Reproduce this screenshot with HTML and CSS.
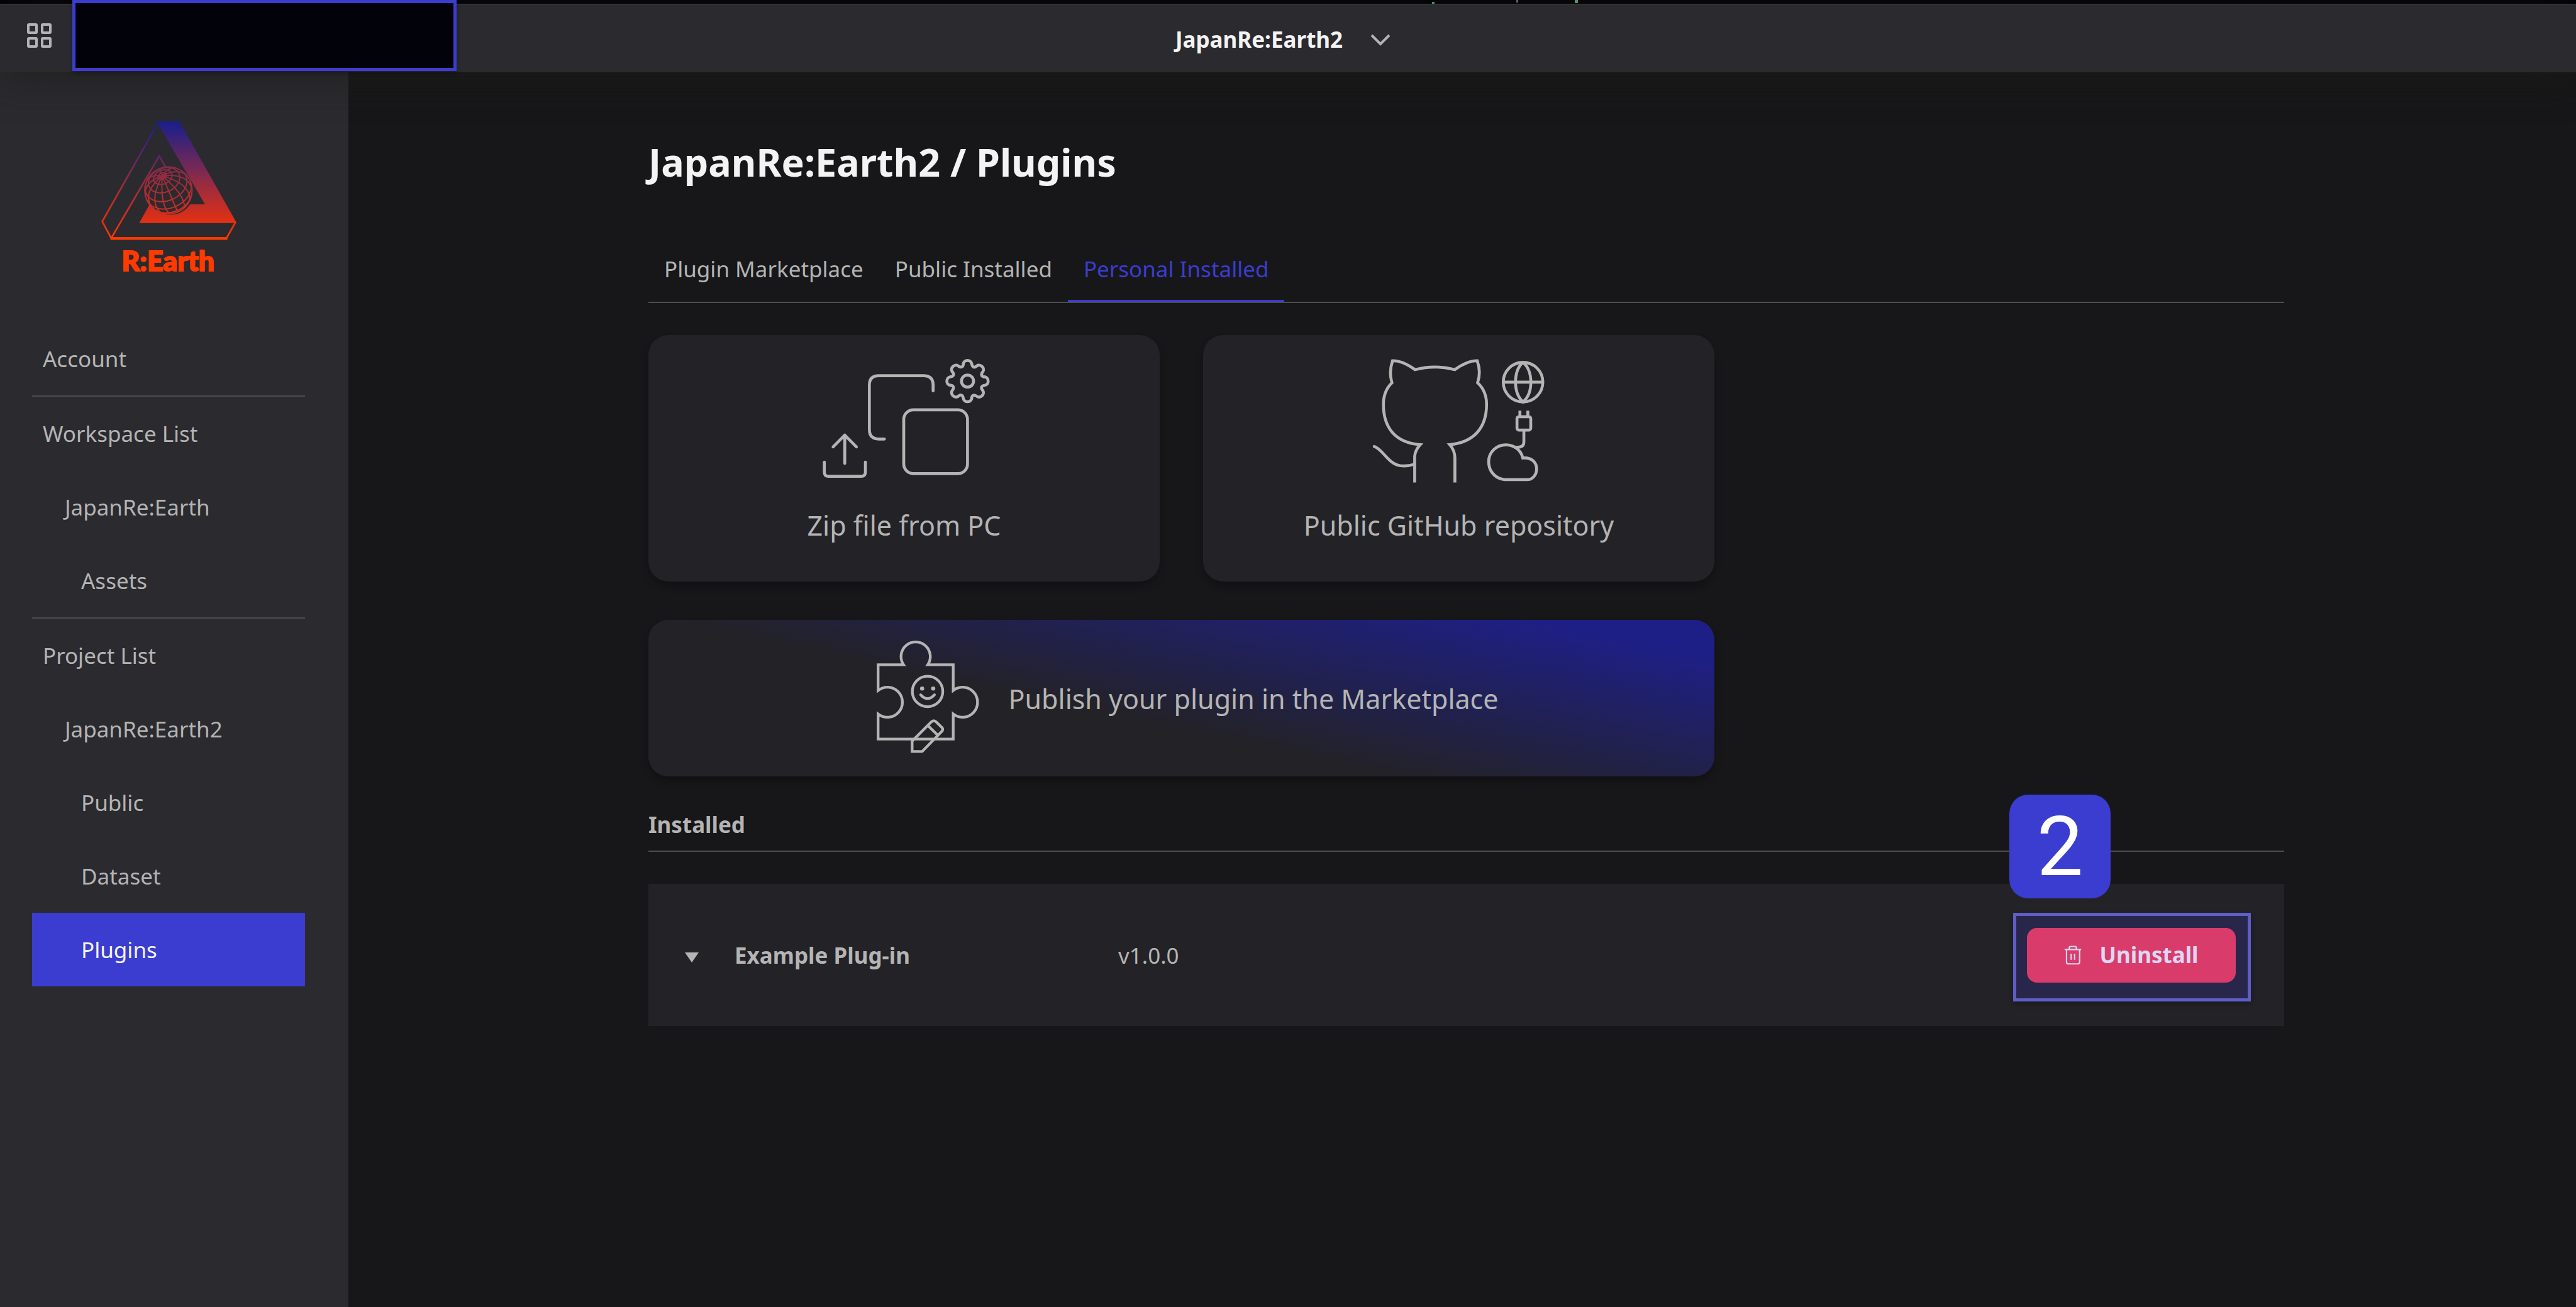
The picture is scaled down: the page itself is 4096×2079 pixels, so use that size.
FILE: index.html
```html
<!DOCTYPE html>
<html lang="en">
<head>
<meta charset="utf-8">
<title>JapanRe:Earth2 / Plugins</title>
<link rel="stylesheet" href="styles.css">
</head>
<body>
<div class="strip"></div>
<header class="header">
  <button class="grid-button" aria-label="Dashboard">
    <svg class="grid-icon" viewBox="0 0 39 39"><g fill="none" stroke="currentColor" stroke-width="4"><rect x="2" y="2" width="13" height="13" rx="1"/><rect x="24" y="2" width="13" height="13" rx="1"/><rect x="2" y="24" width="13" height="13" rx="1"/><rect x="24" y="24" width="13" height="13" rx="1"/></g></svg>
  </button>
  <button class="project-menu">JapanRe:Earth2
    <svg class="chevron" viewBox="0 0 32 20"><path d="M2 3l14 14L30 3" fill="none" stroke="currentColor" stroke-width="4"/></svg>
  </button>
  <div class="redaction"></div>
</header>
<div class="layout">
  <aside class="sidebar">
    <svg class="logo" viewBox="-15 0 750 810" role="img" aria-label="R:Earth">
      <defs>
        <linearGradient id="fade" gradientUnits="userSpaceOnUse" x1="0" y1="60" x2="0" y2="600"><stop offset="0" stop-color="#1e2088"/><stop offset=".5" stop-color="#922b45"/><stop offset=".85" stop-color="#e03014"/><stop offset="1" stop-color="#ff3a00"/></linearGradient>
        <linearGradient id="globeFade" gradientUnits="userSpaceOnUse" x1="44" y1="-104" x2="-44" y2="104"><stop offset="0" stop-color="#842a4b"/><stop offset="1" stop-color="#d22f20"/></linearGradient>
      </defs>
      <path fill="url(#fade)" d="M308 42H410L682 524L678 529H218L268 440A118 118 0 0 0 462 440H533L312 62Z"/>
      <g fill="none" stroke="url(#fade)" stroke-width="8">
        <path d="M311 44L41 522L84 602M84 602L314 208L346 264M680 524L636 602"/>
        <path stroke-width="13" d="M80 603H640"/>
      </g>
      <g transform="translate(358 373) rotate(-23)" fill="none" stroke="url(#globeFade)" stroke-width="6">
        <circle r="113"/>
        <ellipse cy="-75" rx="20" ry="15"/>
        <ellipse cy="-69" rx="46" ry="33"/>
        <ellipse cy="-53" rx="78" ry="57"/>
        <path d="M-92 -66A104 77 0 1 0 92 -66M-113 0A113 84 0 0 0 113 0M-94 62A105 78 0 0 0 94 62"/>
        <path d="M0 -76V113M0 -76Q67 57 37 107M0 -76Q-67 57 -37 107M0 -76Q112 14 75 85M0 -76Q-112 14 -75 85M0 -76Q118 -41 106 38M0 -76Q-118 -41 -106 38M0 -76Q89 -83 110 -26M0 -76Q-89 -83 -110 -26M0 -76Q49 -104 75 -85M0 -76Q-49 -104 -75 -85M0 -76V-113"/>
      </g>
      <text class="logo-text" x="356" y="758" text-anchor="middle">R:Earth</text>
    </svg>
    <nav class="nav">
      <a class="nav-item" href="#">Account</a>
      <a class="nav-item ruled" href="#">Workspace List</a>
      <a class="nav-item level-2" href="#">JapanRe:Earth</a>
      <a class="nav-item level-3" href="#">Assets</a>
      <a class="nav-item ruled" href="#">Project List</a>
      <a class="nav-item level-2" href="#">JapanRe:Earth2</a>
      <a class="nav-item level-3" href="#">Public</a>
      <a class="nav-item level-3" href="#">Dataset</a>
      <a class="nav-item level-3 current" href="#">Plugins</a>
    </nav>
  </aside>
  <main class="main">
    <h1 class="title">JapanRe:Earth2 / Plugins</h1>
    <nav class="tabs">
      <a class="tab" href="#">Plugin Marketplace</a>
      <a class="tab" href="#">Public Installed</a>
      <a class="tab active" href="#">Personal Installed</a>
    </nav>
    <div class="cards">
      <button class="card">
        <svg class="card-icon" viewBox="-12 0 1020 720"><g fill="none" stroke="currentColor" stroke-width="14" stroke-linecap="round" stroke-linejoin="round">
          <path d="M402 456H375Q330 456 330 410V197Q330 152 375 152H590Q636 152 636 197V225"/>
          <rect x="495" y="316" width="306" height="306" rx="46"/>
          <path d="M212 573V437M156 494L212 437L268 494M114 567V615Q114 635 134 635H290Q311 635 311 615V567"/>
          <g transform="translate(801 178)">
            <circle r="29"/>
            <path id="tooth" d="M-20 -84C-16 -104 16 -104 20 -84C22 -66 33 -62 45 -73"/>
            <use href="#tooth" transform="rotate(45)"/><use href="#tooth" transform="rotate(90)"/><use href="#tooth" transform="rotate(135)"/><use href="#tooth" transform="rotate(180)"/><use href="#tooth" transform="rotate(225)"/><use href="#tooth" transform="rotate(270)"/><use href="#tooth" transform="rotate(315)"/>
          </g></g></svg>
        <span>Zip file from PC</span>
      </button>
      <button class="card">
        <svg class="card-icon" viewBox="7 0 1020 720"><g fill="none" stroke="currentColor" stroke-width="14">
          <path d="M304 665V540Q306 510 331 483C205 474 154 395 154 290C154 245 170 210 195 186C184 150 186 115 198 80C235 80 265 95 306 123Q400 98 497 123C535 95 570 80 604 80C617 115 618 150 606 186C632 210 649 245 649 290C649 400 590 472 472 483Q496 510 497 545V665"/>
          <path d="M110 492C150 503 175 575 235 584Q270 588 304 577" stroke-linecap="round"/>
          <circle cx="824" cy="183" r="95"/><path d="M824 88C776 130 776 235 824 278C874 235 874 130 824 88M729 183H919"/>
          <rect x="795" y="349" width="66" height="64" rx="9"/>
          <path d="M809 320V349M847 320V349M828 413V470Q828 495 800 495H780"/>
          <path d="M735 651C690 646 659 610 659 565C659 520 695 484 742 484C785 484 815 512 823 547C865 543 889 568 889 600C889 630 868 651 845 651Z"/></g></svg>
        <span>Public GitHub repository</span>
      </button>
      <button class="card publish">
        <svg class="publish-icon" viewBox="0 0 660 660"><g fill="none" stroke="currentColor" stroke-width="13">
          <path d="M70 167H192A70 70 0 1 1 308 167H430V290A72 72 0 1 1 430 403V523H70V403A72 72 0 1 0 70 290Z"/>
          <circle cx="307" cy="295" r="73"/><path d="M274 311Q307 347 340 311" stroke-linecap="round"/>
          <path d="M233 583V533L325 441Q337 430 348 441L376 468Q384 477 375 487L281 583ZM312 462L353 502"/></g>
          <circle cx="281" cy="281" r="10" fill="currentColor"/><circle cx="334" cy="281" r="10" fill="currentColor"/></svg>
        <span>Publish your plugin in the Marketplace</span>
      </button>
    </div>
    <h2 class="subtitle">Installed</h2>
    <section class="plugin">
      <button class="toggle" aria-label="Show details"><svg class="triangle" viewBox="0 0 22 16"><path d="M0 0H22L11 16Z" fill="currentColor"/></svg></button>
      <strong class="plugin-name">Example Plug-in</strong>
      <span class="plugin-version">v1.0.0</span>
      <div class="callout">
        <button class="uninstall">
          <svg class="trash" viewBox="358 780 90 108"><path d="M360 804H446M384 804V795Q384 788 391 788H414Q421 788 421 795V804M370 804V870Q370 879 379 879H429Q438 879 438 870V804M394 826V858M412 826V858" fill="none" stroke="currentColor" stroke-width="7"/></svg>
          Uninstall
        </button>
        <span class="step">2</span>
      </div>
    </section>
  </main>
</div>
</body>
</html>
```
FILE: styles.css
```css
* { box-sizing: border-box; }

body {
  margin: 0;
  min-height: 100vh;
  display: flex;
  flex-direction: column;
  background: #171719;
  color: #b4b4b4;
  font: 35px/50px "Noto Sans", sans-serif;
}

a { color: inherit; text-decoration: none; }

button {
  padding: 0;
  border: 0;
  background: none;
  color: inherit;
  font: inherit;
}

svg { display: block; flex: none; }

.strip {
  height: 6px;
  background:
    linear-gradient(#4fae88, #4fae88) 2277px 3px / 4px 3px no-repeat,
    linear-gradient(#777, #777) 2411px 0 / 3px 4px no-repeat,
    linear-gradient(#5fae90, #5fae90) 2504px 0 / 5px 5px no-repeat,
    #020207;
}

.header {
  position: relative;
  z-index: 1;
  height: 109px;
  display: flex;
  align-items: center;
  justify-content: center;
  padding-top: 2px;
  background: #2b2a2f;
  border-top: 2px solid #333335;
  box-shadow: 0 10px 60px rgba(26, 26, 20, 0.6);
}

.grid-button { position: absolute; left: 43px; top: 29px; }
.grid-icon { width: 39px; height: 39px; }

.redaction {
  position: absolute;
  left: 115px;
  top: -8px;
  width: 611px;
  height: 113px;
  border: 5px solid #3b3cd0;
  background: #02020b;
  box-shadow: 0 3px 6px rgba(0, 0, 0, 0.3);
}

.project-menu {
  display: flex;
  align-items: center;
  gap: 44px;
  padding-right: 16px;
  color: #f3f3f3;
  font-weight: 700;
}

.chevron { width: 32px; height: 20px; color: #b4b4b4; }

.layout { flex: 1; display: flex; }

.sidebar {
  width: 554px;
  flex: none;
  padding: 64px 69px 64px 51px;
  background: #2b2a2f;
}

.logo { width: 249px; height: 269px; margin: 0 auto 64px; }
.logo-text {
  font: 900 134px "Lato Black", Lato, sans-serif;
  fill: #ff3a00;
  stroke: #ff3a00;
  stroke-width: 6px;
}

.nav { display: flex; flex-direction: column; }
.nav-item { padding: 34px 17px 33px; }
.ruled { border-top: 2px solid #4c4c4e; }
.level-2 { padding-left: 52px; }
.level-3 { padding-left: 78px; }
.current { background: #3b3cd0; color: #f3f3f3; }

.main { flex: 1; padding: 101px 464px 64px 477px; }

.title {
  margin: 0 0 72px;
  color: #f3f3f3;
  font-size: 61px;
  line-height: 84px;
}

.tabs { display: flex; border-bottom: 2px solid #4e4e4e; }
.tab { padding: 31px 25px 24px; border-bottom: 3px solid transparent; }
.active { color: #3b3cd0; border-color: #3b3cd0; }

.cards {
  display: grid;
  grid-template-columns: 813px 813px;
  gap: 61px 69px;
  margin-top: 51px;
}

.card {
  height: 392px;
  display: flex;
  flex-direction: column;
  align-items: center;
  gap: 22px;
  padding-top: 14px;
  border-radius: 32px;
  background: #232226;
  box-shadow: 0 8px 12px rgba(0, 0, 0, 0.25);
  font-size: 43px;
  line-height: 56px;
}

.card-icon { width: 338px; height: 239px; }

.publish {
  grid-column: 1 / 3;
  height: 249px;
  flex-direction: row;
  justify-content: center;
  gap: 12px;
  padding: 2px 2px 0 0;
  background: linear-gradient(12deg, #232226 41%, #1e1f86 90%);
}

.publish-icon { width: 219px; height: 219px; }

.subtitle {
  margin: 52px 0 51px;
  padding-bottom: 16px;
  border-bottom: 2px solid #4e4e4e;
  font-size: 35px;
  line-height: 50px;
}

.plugin {
  height: 226px;
  display: flex;
  align-items: center;
  padding: 2px 53px 0 58px;
  background: #232226;
}

.triangle { width: 22px; height: 16px; }
.toggle { margin-top: 6px; }
.plugin-name { width: 610px; margin-left: 57px; }
.plugin-version { flex: 1; }

.callout {
  position: relative;
  margin-top: 4px;
  padding: 19px 19px 25px 17px;
  border: 5px solid #5f5ec6;
  background: #28264a;
  box-shadow: 0 4px 8px rgba(0, 0, 0, 0.3);
}

.uninstall {
  width: 332px;
  height: 87px;
  display: flex;
  align-items: center;
  justify-content: center;
  gap: 28px;
  border-radius: 16px;
  background: #d93c6b;
  color: #dcd8f4;
  font-weight: 700;
}

.trash { width: 28px; height: 33px; }

.step {
  position: absolute;
  left: -11px;
  top: -193px;
  width: 161px;
  height: 165px;
  border-radius: 30px;
  background: #3b3cd0;
  color: #fff;
  font: 131px/167px Roboto, sans-serif;
  text-align: center;
}
```
